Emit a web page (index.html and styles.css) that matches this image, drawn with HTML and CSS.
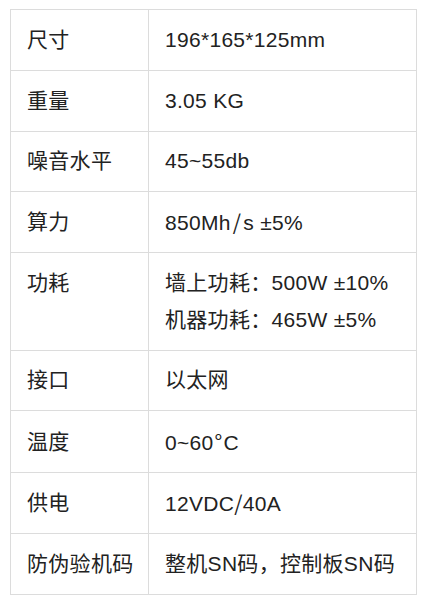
FILE: index.html
```html
<!DOCTYPE html>
<html lang="zh-CN">
<head>
<meta charset="utf-8">
<title>参数</title>
<link rel="stylesheet" href="styles.css">
</head>
<body>
<table class="spec">
  <colgroup><col class="c-key"><col class="c-val"></colgroup>
  <tbody>
    <tr><td>尺寸</td><td>196*165*125mm</td></tr>
    <tr><td>重量</td><td>3.05 KG</td></tr>
    <tr class="short"><td>噪音水平</td><td>45~55db</td></tr>
    <tr><td>算力</td><td>850Mh<span class="sym">/</span>s ±5%</td></tr>
    <tr class="multi"><td class="top">功耗</td><td>墙上功耗：500W ±10%<br>机器功耗：465W ±5%</td></tr>
    <tr><td>接口</td><td>以太网</td></tr>
    <tr class="short"><td>温度</td><td>0~60<span class="deg">°</span>C</td></tr>
    <tr><td>供电</td><td>12VDC<span class="sym sym-tight">/</span>40A</td></tr>
    <tr><td>防伪验机码</td><td>整机SN码，控制板SN码</td></tr>
  </tbody>
</table>
</body>
</html>
```
FILE: styles.css
```css
html, body {
  margin: 0;
  padding: 0;
  background: #fff;
}
body {
  font-family: "Liberation Sans", "Noto Sans CJK SC", sans-serif;
  font-size: 21px;
  color: #222;
  letter-spacing: 0.3px;
}
.spec {
  margin: 9px 0 0 10px;
  width: 407px;
  border-collapse: collapse;
  table-layout: fixed;
}
.c-key { width: 138px; }
.spec td {
  border: 1px solid #dcdcdc;
  padding: 11.25px 16px;
  height: 37.25px;
  line-height: 36px;
  vertical-align: middle;
  white-space: nowrap;
}
.spec .short td { height: 36.5px; }
.spec .multi td { line-height: 37px; }
.spec td.top { vertical-align: top; }
.sym {
  font-family: "Noto Sans CJK SC", sans-serif;
  margin: 0 2px;
}
.sym-tight { margin: 0; }
.deg {
  font-family: "Noto Sans CJK SC", sans-serif;
  margin: 0 1px;
}
```
